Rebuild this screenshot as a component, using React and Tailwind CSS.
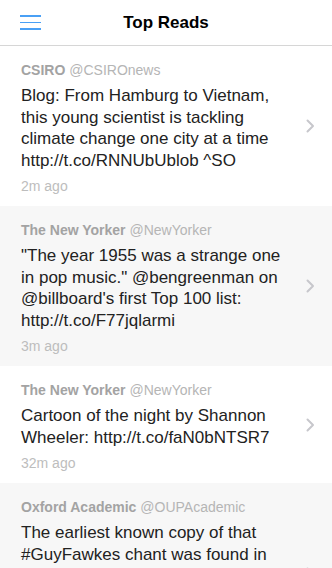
const reads = [
  {
    name: "CSIRO",
    handle: "@CSIROnews",
    text: "Blog: From Hamburg to Vietnam, this young scientist is tackling climate change one city at a time http://t.co/RNNUbUblob ^SO",
    time: "2m ago",
  },
  {
    name: "The New Yorker",
    handle: "@NewYorker",
    text: "\"The year 1955 was a strange one in pop music.\" @bengreenman on @billboard's first Top 100 list: http://t.co/F77jqlarmi",
    time: "3m ago",
  },
  {
    name: "The New Yorker",
    handle: "@NewYorker",
    text: "Cartoon of the night by Shannon Wheeler: http://t.co/faN0bNTSR7",
    time: "32m ago",
  },
  {
    name: "Oxford Academic",
    handle: "@OUPAcademic",
    text: "The earliest known copy of that #GuyFawkes chant was found in Cambridgeshire parish records dating back to 1742 http://t.co/pQ3xYzLm #history",
    time: "45m ago",
  },
];

function Chevron() {
  return (
    <svg width="9" height="14" viewBox="0 0 9 14" fill="none">
      <path d="M1.5 1.5 L7 7 L1.5 12.5" stroke="#c7c7cc" strokeWidth="2" strokeLinecap="round" strokeLinejoin="round" />
    </svg>
  );
}

function ReadRow({ item, shaded }) {
  return (
    <div className={`flex items-center ${shaded ? "bg-[#f7f7f7]" : "bg-white"}`}>
      <div className="w-[287px] pl-[21px] pt-[16px] pb-[11px]">
        <div className="text-[14px] leading-[17px] text-[#a3a3a3] whitespace-nowrap">
          <span className="font-bold">{item.name}</span>{" "}
          <span className="text-[#b5b5b5]">{item.handle}</span>
        </div>
        <div className="mt-[6px] text-[17px] leading-[21.5px] text-[#222222]">{item.text}</div>
        <div className="mt-[7px] text-[14px] leading-[17px] text-[#bdbdbd]">{item.time}</div>
      </div>
      <div className="flex-1 flex justify-center pl-[2px]">
        <Chevron />
      </div>
    </div>
  );
}

export default function App() {
  return (
    <div className="w-[332px] h-[568px] overflow-hidden bg-white font-['Liberation_Sans',Arial,sans-serif]">
      <div className="h-[46px] flex items-center border-b border-[#d6d6d6]">
        <div className="pl-[20px] flex flex-col gap-[5px] w-[62px]">
          <div className="w-[21px] h-[1.5px] bg-[#4aa0f5]" />
          <div className="w-[21px] h-[1.5px] bg-[#4aa0f5]" />
          <div className="w-[21px] h-[1.5px] bg-[#4aa0f5]" />
        </div>
        <div className="flex-1 text-center text-[17px] font-bold text-black pr-[62px]">Top Reads</div>
      </div>
      {reads.map((item, i) => (
        <ReadRow key={i} item={item} shaded={i % 2 === 1} />
      ))}
    </div>
  );
}
